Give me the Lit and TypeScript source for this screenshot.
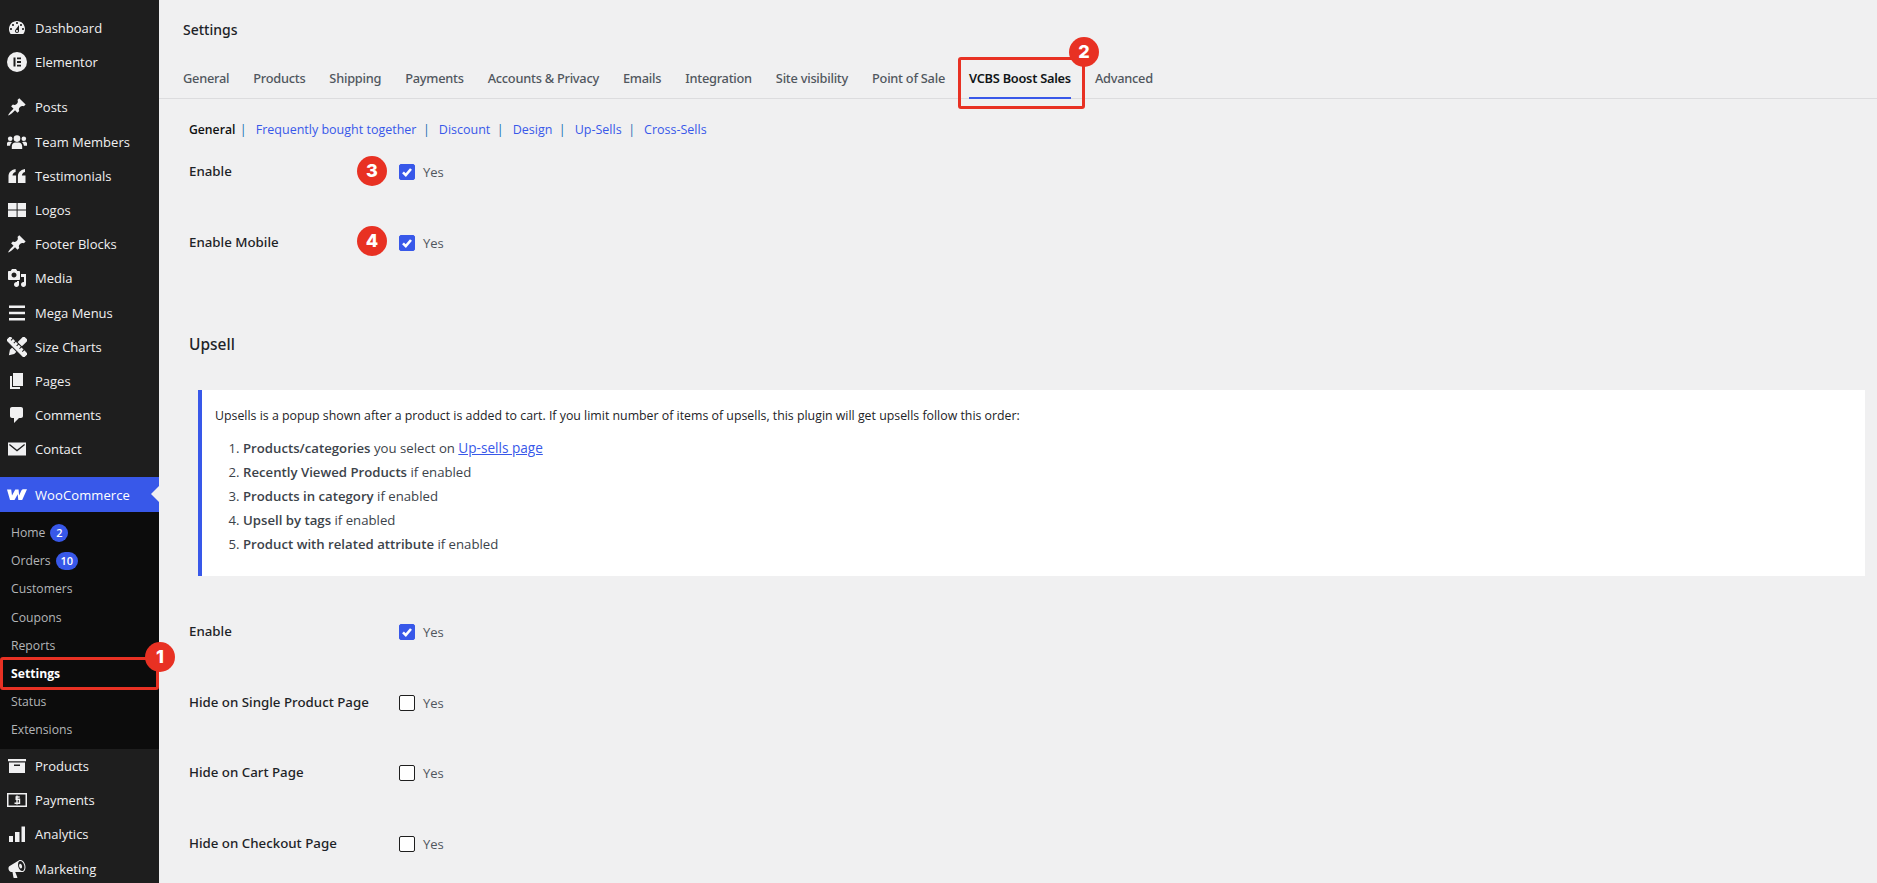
import { LitElement, html, css, svg } from 'lit';
import { customElement } from 'lit/decorators.js';

const ICONS: Record<string, unknown> = {
  dashboard: svg`<path d="M3.76 16h12.48c1.1-1.37 1.76-3.11 1.76-5 0-4.42-3.58-8-8-8s-8 3.58-8 8c0 1.89.66 3.63 1.76 5zM10 4c.55 0 1 .45 1 1s-.45 1-1 1-1-.45-1-1 .45-1 1-1zM6 6c.55 0 1 .45 1 1s-.45 1-1 1-1-.45-1-1 .45-1 1-1zm8 0c.55 0 1 .45 1 1s-.45 1-1 1-1-.45-1-1 .45-1 1-1zm-5.37 5.55L12 7v6c0 1.1-.9 2-2 2s-2-.9-2-2c0-.57.24-1.08.63-1.45zM4 10c.55 0 1 .45 1 1s-.45 1-1 1-1-.45-1-1 .45-1 1-1zm12 0c.55 0 1 .45 1 1s-.45 1-1 1-1-.45-1-1 .45-1 1-1zm-5 3c0-.55-.45-1-1-1s-1 .45-1 1 .45 1 1 1 1-.45 1-1z"/>`,
  elementor: svg`<path fill-rule="evenodd" d="M10 0a10 10 0 1 0 0 20 10 10 0 0 0 0-20zM6.500 5.500h2v9h-2zm3.500 0h4v1.800h-4zm0 3.600h4v1.800h-4zm0 3.600h4v1.800h-4z"/>`,
  pin: svg`<path d="M10.44 3.02l1.82-1.82 6.36 6.35-1.83 1.82c-1.05-.68-2.48-.57-3.41.36l-.75.75c-.92.93-1.04 2.35-.35 3.41l-1.83 1.82-2.41-2.41-2.8 2.79c-.42.42-3.38 2.71-3.8 2.29s1.86-3.39 2.28-3.81l2.79-2.79L4.1 9.36l1.83-1.82c1.05.69 2.48.57 3.4-.36l.75-.75c.93-.92 1.05-2.35.36-3.41z"/>`,
  users: svg`<circle cx="10" cy="6.600" r="3.300"/><circle cx="3.200" cy="6.800" r="2.300"/><circle cx="16.800" cy="6.800" r="2.300"/><path d="M4.800 17v-2.600c0-2.300 1.700-3.900 3.400-3.900h3.600c1.700 0 3.400 1.600 3.400 3.900V17zM-.4 13c0-2 1-3.300 2.600-3.300h1.300c.5 0 1 .2 1.400.5-1 .8-1.600 2-1.800 3.600H0zM20.400 13c0-2-1-3.300-2.600-3.300h-1.300c-.5 0-1 .2-1.400.5 1 .8 1.600 2 1.800 3.600H20z"/>`,
  quote: svg`<path d="M1.500 17v-6.500C1.500 7 3.500 4 8.600 3v3c-2.200.6-3 1.900-3.100 3.600h3.600V17zm9.400 0v-6.500c0-3.500 2-6.500 7.100-7.500v3c-2.200.6-3 1.900-3.100 3.600h3.600V17z"/>`,
  grid: svg`<path d="M1 3h8.600v6.600H1zM10.600 3h8.400v6.600h-8.400zM1 10.600h8.600V17H1zM10.600 10.600h8.400V17h-8.400z"/>`,
  media: svg`<path d="M13 11V4c0-.55-.45-1-1-1h-1.670L9 1H5L3.670 3H2c-.55 0-1 .45-1 1v7c0 .55.45 1 1 1h10c.55 0 1-.45 1-1zM7 4.500c1.380 0 2.500 1.120 2.500 2.500S8.380 9.500 7 9.500 4.500 8.380 4.500 7 5.620 4.500 7 4.500zM14 6h5v10.500c0 1.380-1.120 2.500-2.500 2.500S14 17.880 14 16.500s1.120-2.500 2.500-2.500c.17 0 .34.02.5.05V9h-3V6zm-4 8.050V13h2v3.500c0 1.380-1.120 2.500-2.500 2.500S7 17.880 7 16.500 8.120 14 9.500 14c.17 0 .34.02.5.05z"/>`,
  menu: svg`<path d="M18 5V2.600H2V5h16zm0 6.200V8.800H2v2.400h16zm0 6.200V15H2v2.400h16z"/>`,
  tools: svg`<g transform="rotate(45 10 10)"><path d="M7 -2.500h6V17l-3 4.500L7 17z"/></g><g transform="rotate(-45 10 10)"><path d="M6.600 -3h6.800v26H6.600z" stroke="#1e1e1e" stroke-width="1"/><path d="M13.500 1h-3M13.500 5h-3M13.500 9h-3M13.500 13h-3M13.500 17h-3" stroke="#1e1e1e" stroke-width="1"/></g>`,
  pages: svg`<path d="M6 15V2h10v13H6zm-1 1h8v2H3V5h2v11z"/>`,
  comment: svg`<path d="M5 2h9c1.100 0 2 .9 2 2v7c0 1.100-.9 2-2 2h-2l-5 5v-5H5c-1.100 0-2-.9-2-2V4c0-1.100.9-2 2-2z"/>`,
  email: svg`<path fill-rule="evenodd" d="M1 3.500h18v13H1zM2.800 5l7.200 5.800L17.200 5l.8 1-8 6.500L2 6z"/>`,
  woo: svg`<path d="M0 4.500h4.200l.8 6 3.300-6h3.300l.5 6 2.300-5c.5-1 1.300-1.300 2.300-1.300H20l-4.800 10.800h-3.900l-.6-5.800-3.200 5.800H3z"/>`,
  archive: svg`<path d="M1 3h18v2.300H1zM2 6.500h16V17H2zM7 8.500v1.400h6V8.500z" fill-rule="evenodd"/>`,
  payments: svg`<path fill-rule="evenodd" d="M0 3h20v14H0zM1.500 4.500v11h17v-11z"/><path d="M12.700 7H9.200v2.300h3.300v4H7.500M10 5.500v9" fill="none" stroke="currentColor" stroke-width="1.400"/>`,
  chart: svg`<path d="M2 12h4v6H2zM8 8h4.500v10H8zM14.500 2.500H18V18h-3.500z"/>`,
  megaphone: svg`<path d="M18.150 5.940c.46 1.620.38 3.220-.02 4.480-.42 1.280-1.260 2.180-2.300 2.480-.16.06-.26.06-.4.06-.06.02-.12.02-.18.02-.06.02-.14.02-.22.02h-6.800l2.220 5.500c.02.14-.06.26-.14.34-.08.1-.24.16-.34.16H6.950c-.1 0-.26-.06-.34-.16-.08-.08-.16-.2-.14-.34l-1-5.500H4.250l-.02-.02c-.5.06-1.080-.18-1.540-.62s-.88-1.080-1.060-1.880c-.24-.8-.2-1.560-.02-2.200.18-.62.58-1.080 1.060-1.300l.02-.02 9-5.400c.1-.06.18-.1.24-.16.06-.04.14-.08.24-.12.16-.08.28-.12.5-.18 1.040-.3 2.240.1 3.220.98s1.840 2.240 2.260 3.860zm-2.580 5.980h-.02c.4-.1.74-.34 1.040-.7.58-.7.860-1.760.860-3.040-.02-.64-.1-1.300-.28-1.980-.34-1.360-1.020-2.500-1.780-3.240s-1.680-1.100-2.460-.88c-.82.22-1.400.96-1.700 2-.32 1.040-.28 2.360.06 3.720.38 1.360 1 2.500 1.800 3.240.78.74 1.620 1.100 2.480.88zm-2.540-7.080c.22-.04.42-.02.62.04.38.16.76.48 1.020 1s.42 1.200.42 1.780c0 .3-.04.56-.12.8-.18.48-.44.84-.86.94-.34.1-.8-.06-1.140-.4s-.64-.86-.78-1.500c-.18-.62-.12-1.240.02-1.720s.48-.84.82-.94z"/>`,
};

const icon = (name: string) => html`<svg class="icon" viewBox="0 0 20 20" fill="currentColor">${ICONS[name]}</svg>`;

const TOP_MENU = [
  ['dashboard', 'Dashboard'],
  ['elementor', 'Elementor'],
];
const MID_MENU = [
  ['pin', 'Posts'],
  ['users', 'Team Members'],
  ['quote', 'Testimonials'],
  ['grid', 'Logos'],
  ['pin', 'Footer Blocks'],
  ['media', 'Media'],
  ['menu', 'Mega Menus'],
  ['tools', 'Size Charts'],
  ['pages', 'Pages'],
  ['comment', 'Comments'],
  ['email', 'Contact'],
];
const BOTTOM_MENU = [
  ['archive', 'Products'],
  ['payments', 'Payments'],
  ['chart', 'Analytics'],
  ['megaphone', 'Marketing'],
];
const SUB_MENU: { label: string; count?: number; current?: boolean }[] = [
  { label: 'Home', count: 2 },
  { label: 'Orders', count: 10 },
  { label: 'Customers' },
  { label: 'Coupons' },
  { label: 'Reports' },
  { label: 'Settings', current: true },
  { label: 'Status' },
  { label: 'Extensions' },
];
const TABS = ['General', 'Products', 'Shipping', 'Payments', 'Accounts & Privacy', 'Emails', 'Integration', 'Site visibility', 'Point of Sale', 'VCBS Boost Sales', 'Advanced'];
const SUB_LINKS = ['Frequently bought together', 'Discount', 'Design', 'Up-Sells', 'Cross-Sells'];

// callouts drawn over the page
const MARKERS = [
  { n: 1, x: 160, y: 657 },
  { n: 2, x: 1084, y: 52 },
  { n: 3, x: 372, y: 171 },
  { n: 4, x: 372, y: 241 },
];
const BOXES = [
  { x: 0, y: 657, w: 159, h: 33 },
  { x: 958, y: 57, w: 127, h: 52 },
];

@customElement('app-root')
export class AppRoot extends LitElement {
  static styles = css`
    :host {
      display: block;
      position: relative;
      height: 883px;
      overflow: hidden;
      background: #f0f0f1;
      font-family: 'Open Sans', 'Noto Sans', sans-serif;
      font-size: 13px;
      color: #3c434a;
    }
    .layout {
      display: flex;
      height: 883px;
    }
    .sidebar {
      width: 159px;
      flex: none;
      background: #1e1e1e;
      padding-top: 11px;
      color: #f0f0f1;
      overflow: hidden;
    }
    .item {
      display: flex;
      align-items: center;
      height: 34.2px;
      padding-left: 7px;
      gap: 8px;
    }
    .icon {
      width: 20px;
      height: 20px;
      flex: none;
    }
    .gap-sm {
      height: 11px;
    }
    .active {
      position: relative;
      height: 35px;
      background: #3858e9;
      color: #fff;
      letter-spacing: 0.1px;
    }
    .active::after {
      content: '';
      position: absolute;
      right: 0;
      top: 9px;
      border: 8px solid transparent;
      border-right-color: #f0f0f1;
      border-left-width: 0;
    }
    .submenu {
      background: #0c0c0c;
      padding: 6px 0 5px;
    }
    .sub {
      display: flex;
      align-items: center;
      height: 28.2px;
      padding-left: 11px;
      gap: 5px;
      font-size: 12.2px;
      color: #b3b5b7;
    }
    .sub.current {
      color: #fff;
      font-weight: 700;
    }
    .count {
      min-width: 18px;
      height: 18px;
      padding: 0 5px;
      box-sizing: border-box;
      border-radius: 9px;
      background: #3858e9;
      color: #fff;
      font-size: 11px;
      font-weight: 600;
      line-height: 18px;
      text-align: center;
    }
    main {
      flex: 1;
      min-width: 0;
      padding-left: 24px;
    }
    h1 {
      margin: 0;
      padding-top: 20px;
      height: 38px;
      font-family: 'Noto Sans', sans-serif;
      font-size: 14px;
      line-height: 20px;
      font-weight: 500;
      color: #1d2327;
    }
    .tabs {
      display: flex;
      gap: 24px;
      margin-left: -24px;
      padding-left: 24px;
      height: 41px;
      box-sizing: border-box;
      border-bottom: 1px solid #dcdcde;
      font-family: 'Noto Sans', sans-serif;
      font-size: 12.8px;
      font-weight: 500;
      letter-spacing: -0.25px;
      color: #50575e;
    }
    .tab {
      height: 41px;
      box-sizing: border-box;
      padding-top: 10px;
      line-height: 20px;
    }
    .tab.on {
      color: #101517;
      font-weight: 600;
      border-bottom: 2px solid #3858e9;
    }
    .links {
      display: flex;
      align-items: center;
      height: 24px;
      margin: 18px 0 0 6px;
      font-size: 12.5px;
      color: #3858e9;
    }
    .links b {
      margin-right: -2px;
      color: #111;
      font-weight: 600;
      font-size: 12.2px;
    }
    .links i {
      font-style: normal;
      color: #2271b1;
      margin: 0 9px 0 6.5px;
    }
    .row {
      display: grid;
      grid-template-columns: 210px 1fr;
      align-items: center;
      height: 22px;
      margin-left: 6px;
      font-family: 'Noto Sans', sans-serif;
      font-weight: 500;
      font-size: 13.3px;
      color: #1d2327;
    }
    .row > span {
      padding-bottom: 2px;
    }
    .check {
      display: flex;
      align-items: center;
      gap: 8px;
      font-family: 'Open Sans', sans-serif;
      font-size: 13px;
      font-weight: 400;
      color: #50575e;
    }
    .box {
      width: 16px;
      height: 16px;
      box-sizing: border-box;
      border: 1px solid #1e1e1e;
      border-radius: 2px;
      background: #fff;
    }
    .box.checked {
      border-color: #3858e9;
      background: #3858e9;
    }
    .box svg {
      display: block;
      width: 14px;
      height: 14px;
    }
    .r1 { margin-top: 20px; }
    .r2 { margin-top: 49px; }
    .r3 { margin-top: 48.6px; }
    h2 {
      margin: 78px 0 0 6px;
      font-family: 'Noto Sans', sans-serif;
      font-size: 15.5px;
      line-height: 24px;
      font-weight: 500;
      color: #1d2327;
    }
    .notice {
      margin: 34px 12px 0 15px;
      height: 186px;
      box-sizing: border-box;
      padding: 15px 15px 0 13px;
      background: #fff;
      border-left: 4px solid #3858e9;
      font-size: 12.35px;
    }
    .notice p {
      margin: 0;
      line-height: 22px;
      color: #1d2327;
    }
    .notice ol {
      margin: 9px 0 0;
      padding-left: 28px;
      font-size: 13.2px;
    }
    .notice li {
      line-height: 24px;
    }
    .notice li b {
      font-weight: 600;
    }
    .notice a {
      color: #3858e9;
      font-size: 13.6px;
      text-decoration: underline;
    }
    .notice + .row { margin-top: 45px; }
    .mark {
      position: absolute;
      width: 30px;
      height: 30px;
      margin: -15px 0 0 -15px;
      border-radius: 50%;
      background: #e83123;
      color: #fff;
      font-family: 'Inter', 'Noto Sans', sans-serif;
      font-size: 18px;
      font-weight: 800;
      line-height: 30px;
      text-align: center;
    }
    .callout {
      position: absolute;
      box-sizing: border-box;
      border: 3px solid #e83123;
      border-radius: 3px;
    }
  `;

  private renderCheck(checked: boolean) {
    return html`<label class="check">
      <span class="box ${checked ? 'checked' : ''}">
        ${checked
          ? html`<svg viewBox="0 0 14 14"><path d="M3 7.300l2.800 2.800L11 4" fill="none" stroke="#fff" stroke-width="2.600"/></svg>`
          : ''}
      </span>
      Yes
    </label>`;
  }

  private renderItem([name, label]: string[]) {
    return html`<div class="item">${icon(name)}<span>${label}</span></div>`;
  }

  render() {
    return html`
      <div class="layout">
        <nav class="sidebar">
          ${TOP_MENU.map((m) => this.renderItem(m))}
          <div class="gap-sm"></div>
          ${MID_MENU.map((m) => this.renderItem(m))}
          <div class="gap-sm"></div>
          <div class="item active">${icon('woo')}<span>WooCommerce</span></div>
          <div class="submenu">
            ${SUB_MENU.map(
              (s) => html`<div class="sub ${s.current ? 'current' : ''}">
                ${s.label}${s.count ? html`<span class="count">${s.count}</span>` : ''}
              </div>`
            )}
          </div>
          ${BOTTOM_MENU.map((m) => this.renderItem(m))}
        </nav>
        <main>
          <h1>Settings</h1>
          <div class="tabs">
            ${TABS.map((t) => html`<div class="tab ${t === 'VCBS Boost Sales' ? 'on' : ''}">${t}</div>`)}
          </div>
          <div class="links">
            <b>General</b>
            ${SUB_LINKS.map((l) => html`<i>|</i><span>${l}</span>`)}
          </div>
          <div class="row r1"><span>Enable</span>${this.renderCheck(true)}</div>
          <div class="row r2"><span>Enable Mobile</span>${this.renderCheck(true)}</div>
          <h2>Upsell</h2>
          <div class="notice">
            <p>Upsells is a popup shown after a product is added to cart. If you limit number of items of upsells, this plugin will get upsells follow this order:</p>
            <ol>
              <li><b>Products/categories</b> you select on <a>Up-sells page</a></li>
              <li><b>Recently Viewed Products</b> if enabled</li>
              <li><b>Products in category</b> if enabled</li>
              <li><b>Upsell by tags</b> if enabled</li>
              <li><b>Product with related attribute</b> if enabled</li>
            </ol>
          </div>
          <div class="row"><span>Enable</span>${this.renderCheck(true)}</div>
          <div class="row r3"><span>Hide on Single Product Page</span>${this.renderCheck(false)}</div>
          <div class="row r3"><span>Hide on Cart Page</span>${this.renderCheck(false)}</div>
          <div class="row r3"><span>Hide on Checkout Page</span>${this.renderCheck(false)}</div>
        </main>
      </div>
      ${BOXES.map(
        (b) => html`<div class="callout" style="left:${b.x}px;top:${b.y}px;width:${b.w}px;height:${b.h}px"></div>`
      )}
      ${MARKERS.map((m) => html`<div class="mark" style="left:${m.x}px;top:${m.y}px">${m.n}</div>`)}
    `;
  }
}
